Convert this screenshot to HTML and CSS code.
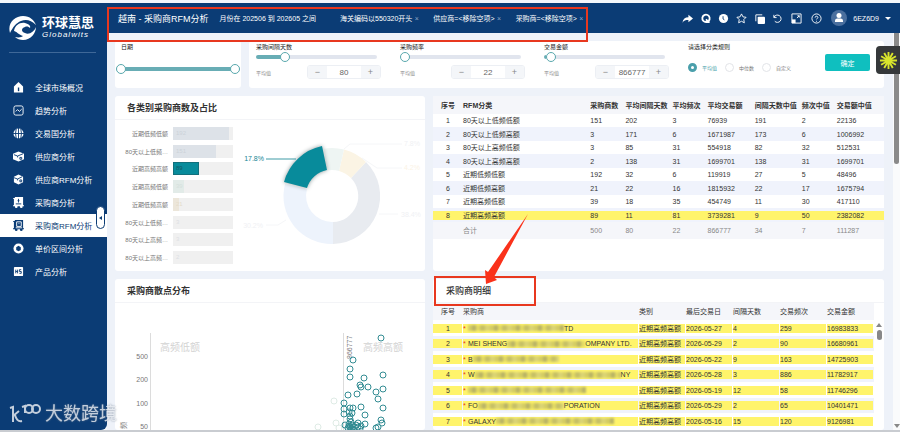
FILE: index.html
```
<!DOCTYPE html>
<html lang="zh-CN">
<head>
	<meta charset="utf-8">
	<title>采购商RFM分析</title>
	<meta name="viewport" content="width=device-width, initial-scale=1">
	<link rel="stylesheet" href="styles.css">
</head>
<body>
<div class="app">
	<aside class="sidebar">
		<div class="brand">
			<svg class="brand-mark" viewBox="0 0 28 24" aria-hidden="true">
				<path d="M1 17C-2 7 6 0 14 0c7 0 11 4 13 9-5-5-10-6-15-4C7 7 4 11 1 17z"/>
				<path d="M5 15c1-6 6-9 11-8 4 1 6 3 5 5-1-1-3-2-5-1-4 1-4 5 0 6 4 2 9-1 11-6 0 6-5 13-13 13-3 0-6-1-8-3 4 1 7 0 8-1-4-1-7-5-9-5z"/>
			</svg>
			<div class="brand-text">
				<strong>环球慧思</strong>
				<em>Globalwits</em>
			</div>
		</div>
		<nav class="menu">
			<a href="#"><svg viewBox="0 0 12 12"><path d="M6 0l5 5v6.500H1V5z"/><path class="cut" d="M5.300 6h1.500v4H5.300z"/></svg>全球市场概况</a>
			<a href="#"><svg viewBox="0 0 12 12"><rect class="line" x="1" y="1" width="10" height="10" rx="2"/><path class="line" d="M3 7l2-2 2 2 2.500-2.500"/></svg>趋势分析</a>
			<a href="#"><svg viewBox="0 0 12 12"><circle cx="6" cy="6" r="5.500"/><path class="cut-line" d="M0 6h12M6 0v12M3.500 1Q2 6 3.500 11M8.500 1Q10 6 8.500 11"/></svg>交易国分析</a>
			<a href="#"><svg viewBox="0 0 12 12"><path d="M0 3l6-2.500L12 3v6l-6 2.500L0 9z"/><path class="cut-line" d="M1 4l4 1.500 6-2.500M5 5.500v1.500M7.500 7h2v2h-2z"/></svg>供应商分析</a>
			<a href="#"><svg viewBox="0 0 12 12"><path d="M1 3l5-2.500L11 3v6l-5 2.500L1 9z"/><path class="cut-line" d="M1 4l4 1.500 5-2.500M5 5.500v1.500M7.500 6.500h2v2h-2z"/></svg>供应商RFM分析</a>
			<a href="#"><svg viewBox="0 0 12 12"><path d="M2 0h9v9h1v1H0V9h1V2H0V1h2z"/><circle cx="3.500" cy="10.500" r="1.500"/><circle cx="9" cy="10.500" r="1.500"/><path class="cut-line" d="M3 7.500h6M6 2v4M5 4h2"/></svg>采购商分析</a>
			<a href="#" class="active"><svg viewBox="0 0 12 12"><path d="M2 0h9v9h1v1H0V9h1V2H0V1h2z"/><circle cx="3.500" cy="10.500" r="1.500"/><circle cx="9" cy="10.500" r="1.500"/><path class="cut-line" d="M4 2h5v5H4zM6 4h1M3 8.500h7"/></svg>采购商RFM分析</a>
			<a href="#"><svg viewBox="0 0 12 12"><circle cx="6" cy="6" r="5.500"/><path class="cut" d="M6 3l2.500 1.500v3L6 9 3.500 7.500v-3z"/></svg>单价区间分析</a>
			<a href="#"><svg viewBox="0 0 12 12"><rect x="1" y="1" width="10" height="10" rx="1"/><path class="cut-line" d="M3 4v4M5 4v4M3 6h2M9 4H7v2h2v2H7"/></svg>产品分析</a>
		</nav>
		<button class="collapse" aria-label="收起菜单"></button>
	</aside>

	<header class="topbar">
		<h1>越南 - 采购商RFM分析</h1>
		<ul class="conditions">
			<li>月份在 202506 到 202605 之间</li>
			<li>海关编码以550320开头<button aria-label="移除海关编码">×</button></li>
			<li>供应商=&lt;移除空项&gt;<button aria-label="移除供应商">×</button></li>
			<li>采购商=&lt;移除空项&gt;<button aria-label="移除采购商">×</button></li>
		</ul>
		<div class="tools">
			<button aria-label="分享"><svg viewBox="0 0 12 12"><path class="fill" d="M7 2l5 4-5 4V7.500C4 7.500 2 8 .5 10.500 1 6.500 3.500 4.500 7 4.500z"/></svg></button>
			<button aria-label="查询"><svg viewBox="0 0 12 12"><path class="thick" d="M9.500 8.500A4 4 0 1 0 7 9.800h3.500M6.500 7l3 3"/></svg></button>
			<button aria-label="历史"><svg viewBox="0 0 12 12"><circle class="fill" cx="6" cy="6" r="5"/><path class="dark" d="M5.500 3.500v3l1.500 1"/></svg></button>
			<button aria-label="收藏"><svg viewBox="0 0 12 12"><path d="M6 1l1.600 3.200 3.400.5-2.500 2.500.6 3.500L6 9l-3.100 1.700.6-3.500L1 4.700l3.400-.5z"/></svg></button>
			<button aria-label="复制"><svg viewBox="0 0 12 12"><rect class="fill" x="4" y="4" width="8" height="8" rx="1"/><path d="M2 9V2h7"/></svg></button>
			<button aria-label="刷新"><svg viewBox="0 0 12 12"><path d="M2 2v3h3M2.300 4.500A4 4 0 1 1 3 9"/></svg></button>
			<button aria-label="全屏" class="wide"><svg viewBox="0 0 12 12"><path d="M1 1h10v10H1zM6.500 5.500L9 3M7 3h2v2"/><path class="fill" d="M1 7h4v4H1z"/></svg></button>
			<button aria-label="帮助" class="wide"><svg viewBox="0 0 12 12"><circle cx="6" cy="6" r="5"/><path d="M4.500 5c0-2 3-2 3 0 0 1-1.500 1-1.500 2M6 8.500v1"/></svg></button>
		</div>
		<button class="user">
			<svg viewBox="0 0 16 16"><circle class="ring" cx="8" cy="8" r="8"/><circle cx="8" cy="5.500" r="2.500"/><path d="M4 12V10.500Q4 9 6 8.500h4q2 .5 2 2V12z"/></svg>
			6EZ6D9
			<i class="caret"></i>
		</button>
		<div class="mark mark-top"></div>
	</header>

	<main class="content">
		<section class="card date-filter">
			<h3>日期</h3>
			<div class="range-pair">
				<input type="range" min="0" max="100" value="0" aria-label="开始日期">
				<input type="range" min="0" max="100" value="100" aria-label="结束日期">
			</div>
		</section>

		<section class="card filters">
			<div class="filter">
				<label for="gap">采购间隔天数</label>
				<input id="gap" type="range" value="22" style="--fill: 22%">
				<div class="average">
					<span>平均值</span>
					<div class="stepper"><button aria-label="减少">−</button><input type="text" value="80" aria-label="间隔天数平均值"><button aria-label="增加">+</button></div>
				</div>
			</div>
			<div class="filter">
				<label for="freq">采购频率</label>
				<input id="freq" type="range" value="0" style="--fill: 0%">
				<div class="average">
					<span>平均值</span>
					<div class="stepper"><button aria-label="减少">−</button><input type="text" value="22" aria-label="频率平均值"><button aria-label="增加">+</button></div>
				</div>
			</div>
			<div class="filter">
				<label for="amount">交易金额</label>
				<input id="amount" type="range" value="2" style="--fill: 2%">
				<div class="average">
					<span>平均值</span>
					<div class="stepper"><button aria-label="减少">−</button><input type="text" value="866777" aria-label="金额平均值"><button aria-label="增加">+</button></div>
				</div>
			</div>
			<fieldset class="rules">
				<legend>请选择分类规则</legend>
				<div class="options">
					<label><input type="radio" name="rule" checked><span>平均值</span></label>
					<label><input type="radio" name="rule"><span>中位数</span></label>
					<label><input type="radio" name="rule"><span>自定义</span></label>
				</div>
			</fieldset>
			<button class="confirm">确定</button>
		</section>

		<section class="card share">
			<h2>各类别采购商数及占比</h2>
			<div class="share-body">
				<ul class="bars">
					<li><span>近期低频低额</span><div class="bar"><i class="grey" style="width: 93%">192</i></div></li>
					<li><span>80天以上低频…</span><div class="bar"><i class="grey" style="width: 72%">151</i></div></li>
					<li><span>近期高频高额</span><div class="bar"><i class="teal" style="width: 43%">89</i></div></li>
					<li><span>近期高频低额</span><div class="bar"><i class="green" style="width: 19%">39</i></div></li>
					<li><span>近期低频高额</span><div class="bar"><i class="sand" style="width: 10%">21</i></div></li>
					<li><span>80天以上低频…</span><div class="bar"><i style="width: 2%">3</i></div></li>
					<li><span>80天以上高频…</span><div class="bar"><i style="width: 2%">3</i></div></li>
					<li><span>80天以上高频…</span><div class="bar"><i style="width: 2%">2</i></div></li>
				</ul>
				<svg class="donut" viewBox="-99 -76 192 151" role="img" aria-label="各类别占比">
					<path fill="#e8ebf0" d="M34-34A48 48 0 0 1 1 48V26A26 26 0 0 0 19-18z"/>
					<path fill="#edf3fc" d="M1 48A48 48 0 0 1-47-12L-25-7A26 26 0 0 0 1 26z"/>
					<path fill="#fbf4e4" d="M12-46.500A48 48 0 0 1 34-34L19-18A26 26 0 0 0 7-25z"/>
					<path fill="#eef5f3" d="M-8-47.300A48 48 0 0 1 12-46.500L7-25A26 26 0 0 0-5-25.500z"/>
					<path class="slice" d="M-48-14A50 50 0 0 1-10-50L-5-26A26 26 0 0 0-25-8z"/>
					<path class="guide" d="M-66-37h30"/>
					<path class="faint" d="M12-47L18-52H70M47 18H66M-46 24l-8 5H-66M30-38l15 10h25"/>
					<text x="-68" y="-35" text-anchor="end">17.8%</text>
					<text class="dim" x="69" y="21">38.4%</text>
					<text class="dim" x="-69" y="32" text-anchor="end">30.2%</text>
					<text class="dim" x="72" y="-50">7.8%</text>
					<text class="dim sandy" x="72" y="-26">4.2%</text>
				</svg>
			</div>
		</section>

		<section class="card summary">
			<table class="grid summary-grid">
				<colgroup><col class="c-no"><col class="c-class"><col class="c-short"><col class="c-long"><col class="c-short"><col class="c-long"><col class="c-long"><col class="c-short"><col class="c-long"></colgroup>
				<thead>
					<tr><th>序号</th><th>RFM分类</th><th>采购商数</th><th>平均间隔天数</th><th>平均频次</th><th>平均交易额</th><th>间隔天数中值</th><th>频次中值</th><th>交易额中值</th></tr>
				</thead>
				<tbody>
					<tr><td>1</td><td>80天以上低频低额</td><td>151</td><td>202</td><td>3</td><td>76939</td><td>191</td><td>2</td><td>22136</td></tr>
					<tr><td>2</td><td>80天以上低频高额</td><td>3</td><td>171</td><td>6</td><td>1671987</td><td>173</td><td>6</td><td>1006992</td></tr>
					<tr><td>3</td><td>80天以上高频低额</td><td>3</td><td>85</td><td>31</td><td>554918</td><td>82</td><td>32</td><td>512531</td></tr>
					<tr><td>4</td><td>80天以上高频高额</td><td>2</td><td>138</td><td>31</td><td>1699701</td><td>138</td><td>31</td><td>1699701</td></tr>
					<tr><td>5</td><td>近期低频低额</td><td>192</td><td>32</td><td>6</td><td>119919</td><td>27</td><td>5</td><td>48496</td></tr>
					<tr><td>6</td><td>近期低频高额</td><td>21</td><td>22</td><td>16</td><td>1815932</td><td>22</td><td>17</td><td>1675794</td></tr>
					<tr><td>7</td><td>近期高频低额</td><td>39</td><td>18</td><td>35</td><td>454749</td><td>11</td><td>30</td><td>417110</td></tr>
					<tr class="hit"><td>8</td><td>近期高频高额</td><td>89</td><td>11</td><td>81</td><td>3739281</td><td>9</td><td>50</td><td>2382082</td></tr>
				</tbody>
				<tfoot>
					<tr><td></td><td>合计</td><td>500</td><td>80</td><td>22</td><td>866777</td><td>34</td><td>7</td><td>111287</td></tr>
				</tfoot>
			</table>
		</section>

		<section class="card scatter">
			<h2>采购商散点分布</h2>
			<svg class="plot" viewBox="0 0 310 128" preserveAspectRatio="xMinYMin slice" role="img" aria-label="采购商散点分布">
				<path class="axis" d="M35.500 30V128M228.500 30V128"/>
				<g class="ticks" text-anchor="end">
					<text x="33" y="56">500</text>
					<text x="33" y="79">200</text>
					<text x="33" y="103">100</text>
					<text x="33" y="126">50</text>
				</g>
				<text class="ticks" transform="translate(237 56) rotate(-90)">866777</text>
				<text class="ticks" transform="translate(11 126) rotate(-90)">频</text>
				<text class="zone" x="45" y="48">高频低额</text>
				<text class="zone" x="248" y="48">高频高额</text>
				<g class="pale"><circle cx="219" cy="98" r="3"/><circle cx="203" cy="124" r="3"/><circle cx="221" cy="120" r="3"/><circle cx="224" cy="125" r="3"/></g>
				<g id="dots" class="dots"></g>
			</svg>
		</section>

		<section class="card detail">
			<h2>采购商明细</h2>
			<div class="detail-body">
				<table class="grid detail-grid">
					<colgroup><col class="d-no"><col class="d-name"><col class="d-mid"><col class="d-mid"><col class="d-mid"><col class="d-mid"><col class="d-mid"></colgroup>
					<thead>
						<tr><th>序号</th><th>采购商</th><th>类别</th><th>最后交易日</th><th>间隔天数</th><th>交易频次</th><th>交易金额</th></tr>
					</thead>
					<tbody>
						<tr><td>1</td><td><div class="name"><b>*</b><i class="mask w6"></i>TD</div></td><td>近期高频高额</td><td>2026-05-27</td><td>4</td><td>259</td><td>16983833</td></tr>
						<tr><td>2</td><td><div class="name"><b>*</b>MEI SHENG<i class="mask w4"></i>OMPANY LTD.</div></td><td>近期高频高额</td><td>2026-05-29</td><td>2</td><td>90</td><td>16680961</td></tr>
						<tr><td>3</td><td><div class="name"><b>*</b>B<i class="mask w5"></i></div></td><td>近期高频高额</td><td>2026-05-22</td><td>9</td><td>163</td><td>14725903</td></tr>
						<tr><td>4</td><td><div class="name"><b>*</b>W<i class="mask w8"></i>NY</div></td><td>近期高频高额</td><td>2026-05-28</td><td>3</td><td>886</td><td>11782917</td></tr>
						<tr><td>5</td><td><div class="name"><b>*</b><i class="mask w7"></i></div></td><td>近期高频高额</td><td>2026-05-19</td><td>12</td><td>58</td><td>11746296</td></tr>
						<tr><td>6</td><td><div class="name"><b>*</b>FO<i class="mask w5"></i>PORATION</div></td><td>近期高频高额</td><td>2026-05-29</td><td>2</td><td>65</td><td>10401471</td></tr>
						<tr><td>7</td><td><div class="name"><b>*</b>GALAXY<i class="mask w7"></i></div></td><td>近期高频高额</td><td>2026-05-16</td><td>15</td><td>120</td><td>9126981</td></tr>
					</tbody>
				</table>
				<div class="mini-scroll"><i class="up"></i><i class="thumb"></i></div>
			</div>
			<div class="mark mark-detail"></div>
			<svg class="arrow" viewBox="0 0 46 72" aria-hidden="true"><path d="M44 1L10 64l3 3L2 71 1 57l3 2z"/></svg>
		</section>
	</main>

	<div class="page-scroll"><i class="thumb"></i><i class="down"></i></div>
	<button class="helper" aria-label="助手">
		<svg viewBox="0 0 20 20"><path d="M10 1v18M1 10h18M5.500 2.200l9 15.600M14.500 2.200l-9 15.600M2.200 5.500l15.600 9M17.800 5.500l-15.600 9"/></svg>
	</button>
	<div class="stamp">
		<svg viewBox="0 0 32 22" aria-hidden="true"><path d="M1 5l3-1v15M4 13l6-5M6 12c1 4 3 7 7 6M13 4l3-1v7"/><circle cx="20" cy="6" r="4"/><circle cx="27" cy="6" r="4"/></svg>
		大数跨境
	</div>
</div>
<script>
	const DOTS = [
		[266,35],[238,57],[235,66],[235,74],[249,75],[268,72],[245,82],[246,84],[253,84],[268,86],
		[261,89],[263,96],[233,92],[242,91],[229,100],[229,106],[229,111],[235,105],[238,105],[246,104],
		[250,112],[268,105],[266,117],[267,120],[263,124],[261,125],[243,120],[250,121],[230,122],[234,109],
		[237,110],[235,113],[235,116],[236,119],[234,121],[237,122],[235,124],[238,124],[233,125],[236,126],
		[235,127],[239,127],[243,124],[245,126],[241,122],[234,123],[237,126],[246,123]
	];
	document.getElementById('dots').innerHTML = DOTS.map(([x, y]) => `<circle cx="${x}" cy="${y}" r="3"/>`).join('');
</script>
</body>
</html>
```
FILE: styles.css
```
* {
	box-sizing: border-box;
}
body {
	margin: 0;
	color: #333;
	font-family: "Liberation Sans", "Noto Sans CJK SC", sans-serif;
	font-size: 7px;
	background: #f4f7fb;
}
button,
input {
	font: inherit;
	color: inherit;
	margin: 0;
	padding: 0;
	border: 0;
	background: none;
}
h1,
h2,
h3,
ul {
	margin: 0;
	padding: 0;
	list-style: none;
}
i {
	font-style: normal;
}
.app {
	position: relative;
	display: grid;
	grid-template-columns: 107px 1fr 7px;
	grid-template-rows: 30px 1fr;
	height: 100vh;
	padding-top: 3px;
	border-bottom: 2px solid #c9ccd1;
	overflow: hidden;
}

/* sidebar */
.sidebar {
	position: relative;
	grid-row: 1 / 3;
	color: #fff;
	background: #0b3c75;
	border-bottom-right-radius: 6px;
}
.brand {
	display: flex;
	align-items: center;
	gap: 5px;
	height: 50px;
	margin: 0 11px 23px 9px;
	border-bottom: 1px solid #3f6898;
}
.brand-mark {
	width: 28px;
	height: 24px;
	fill: #fff;
}
.brand-text {
	display: flex;
	flex-direction: column;
}
.brand strong {
	font: bold 13px/14px "Liberation Serif", "Noto Sans CJK SC", serif;
}
.brand em {
	font-size: 8px;
	line-height: 9px;
	letter-spacing: 1px;
}
.menu a {
	display: flex;
	align-items: center;
	gap: 11px;
	height: 23px;
	padding-left: 13px;
	color: #fff;
	font-size: 8px;
	text-decoration: none;
}
.menu svg {
	width: 11px;
	height: 11px;
	fill: #fff;
}
.menu .line {
	fill: none;
	stroke: #fff;
}
.menu .cut {
	fill: #0b3c75;
}
.menu .cut-line {
	fill: none;
	stroke: #0b3c75;
}
.menu .active {
	color: #0b3c75;
	background: #fff;
}
.menu .active svg {
	fill: #0b3c75;
}
.menu .active .cut-line {
	stroke: #fff;
}
.collapse {
	position: absolute;
	top: 203px;
	right: 2px;
	width: 9px;
	height: 23px;
	display: grid;
	place-items: center;
	background: #fff;
	border: 1px solid #0b3c75;
	border-radius: 5px;
}
.collapse::before {
	content: "";
	border: 2px solid transparent;
	border-right: 3px solid #0b3c75;
	border-left: 0;
}

/* top bar */
.topbar {
	position: relative;
	grid-column: 2 / 4;
	display: flex;
	align-items: center;
	padding: 0 9px 0 11px;
	color: #fff;
	background: #0b3c75;
}
.topbar h1 {
	margin-right: 11px;
	font-size: 9px;
	font-weight: normal;
	white-space: nowrap;
}
.conditions {
	display: flex;
	gap: 12px;
	white-space: nowrap;
}
.conditions li:first-child {
	margin-right: 12px;
}
.conditions button {
	width: 9px;
	color: #8da7c6;
}
.tools {
	display: flex;
	align-items: center;
	gap: 6px;
	margin-left: auto;
}
.tools button {
	display: grid;
	place-items: center;
	width: 12px;
}
.tools .wide {
	width: 14px;
}
.tools svg {
	width: 11px;
	height: 11px;
	fill: none;
	stroke: #fff;
}
.tools .thick {
	stroke-width: 2;
}
.tools .fill {
	fill: #fff;
	stroke: none;
}
.tools .dark {
	stroke: #0b3c75;
}
.user {
	display: flex;
	align-items: center;
	gap: 6px;
	margin-left: 8px;
}
.user svg {
	width: 16px;
	height: 16px;
	fill: #fff;
}
.user .ring {
	fill: #4a6f9e;
}
.caret {
	border: 3px solid transparent;
	border-top-color: #fff;
	border-bottom: 0;
}

/* red marks */
.mark {
	position: absolute;
	border: 2px solid #e8381f;
	pointer-events: none;
	z-index: 2;
}
.mark-top {
	top: 4px;
	left: 0;
	width: 481px;
	height: 35px;
}
.mark-detail {
	top: -3px;
	left: 1px;
	width: 102px;
	height: 30px;
}
.arrow {
	position: absolute;
	top: -66px;
	left: 51px;
	width: 46px;
	height: 72px;
	fill: #fa321b;
	z-index: 3;
}

/* content */
.content {
	display: grid;
	grid-template-columns: 126fr 176fr 451fr;
	grid-template-rows: auto auto 1fr;
	gap: 8px;
	min-height: 0;
	padding: 8px 9px 0 8px;
	background: #eef2f9;
}
.card {
	position: relative;
	min-width: 0;
	min-height: 0;
	background: #fff;
	border-radius: 3px;
}
.card h2 {
	height: 24px;
	padding-left: 12px;
	font-size: 9px;
	line-height: 24px;
	border-bottom: 1px solid #f3f4f7;
}
.filters {
	grid-column: 2 / 4;
	display: flex;
	gap: 19px;
	padding: 2px 14px 0 7px;
	min-height: 47px;
}
.date-filter {
	padding: 2px 1px 0;
}
.date-filter h3,
.filter > label,
.rules legend {
	display: block;
	padding: 0;
	font-size: 6px;
	font-weight: normal;
	line-height: 9px;
	color: #222;
}
.date-filter h3 {
	padding-left: 5px;
}
.range-pair {
	display: grid;
	margin-top: 12px;
}
.range-pair input {
	grid-area: 1 / 1;
	pointer-events: none;
}
.range-pair input:first-child {
	--fill: 100%;
}
.range-pair input:last-child {
	--track: transparent;
	--fill: 0%;
}
input[type="range"] {
	display: block;
	width: 100%;
	height: 10px;
	appearance: none;
}
input[type="range"]::-webkit-slider-runnable-track {
	height: 4px;
	border-radius: 2px;
	background: linear-gradient(to right, #68adb5 var(--fill), var(--track, #e1e5ee) var(--fill));
}
input[type="range"]::-webkit-slider-thumb {
	width: 10px;
	height: 10px;
	margin-top: -3px;
	appearance: none;
	pointer-events: auto;
	background: #fff;
	border: 1px solid #59a8ad;
	border-radius: 50%;
}
.filter {
	flex: 0 1 125px;
	min-width: 0;
}
.filter input[type="range"] {
	width: 121px;
	max-width: 100%;
}
.average {
	display: flex;
	align-items: center;
	justify-content: space-between;
	margin-top: 3px;
	font-size: 5px;
	color: #888;
}
.stepper {
	display: flex;
	width: 74px;
	height: 14px;
	font-size: 8px;
	color: #666;
	border: 1px solid #eceff4;
	border-radius: 3px;
	overflow: hidden;
}
.stepper button {
	flex: 0 0 19px;
	font-size: 9px;
	line-height: 12px;
	color: #888;
	background: #f4f6f9;
}
.stepper input {
	flex: 1;
	min-width: 0;
	text-align: center;
}
.rules {
	margin: 0;
	padding: 0;
	border: 0;
}
.options {
	display: flex;
	gap: 8px;
	margin-top: 11px;
	font-size: 5px;
	color: #777;
}
.options label {
	display: flex;
	align-items: center;
	gap: 5px;
	white-space: nowrap;
}
.options input {
	width: 9px;
	height: 9px;
	appearance: none;
	border: 1px solid #e2e4e8;
	border-radius: 50%;
}
.options input:checked {
	border: 3px solid #4a9fab;
}
.options input:checked + span {
	color: #4a9fab;
}
.confirm {
	width: 45px;
	height: 17px;
	margin: 11px 0 0 auto;
	color: #fff;
	background: #0fbfbf;
	border-radius: 2px;
}

/* category share */
.share {
	grid-column: 1 / 3;
	min-height: 175px;
}
.share-body {
	display: flex;
	height: 151px;
}
.bars {
	display: flex;
	flex-direction: column;
	justify-content: space-between;
	flex: 0 0 118px;
	padding: 7px 0 7px 8px;
}
.bars li {
	display: flex;
	align-items: center;
	gap: 5px;
	font-size: 6px;
	color: #777;
}
.bars span {
	flex: 0 0 45px;
	text-align: right;
	white-space: nowrap;
}
.bar {
	flex: 1;
	height: 13px;
	line-height: 13px;
	background: #f0f0f0;
}
.bar i {
	display: block;
	height: 13px;
	padding-left: 3px;
	color: #dde0e4;
}
.bar .grey {
	color: #ccd2d9;
	background: #dde2e8;
}
.bar .teal {
	color: #135a66;
	background: #088b9b;
	outline: 1px solid #13707c;
	outline-offset: -1px;
}
.bar .green {
	color: #d5e0dc;
	background: #e2ebe8;
}
.bar .sand {
	color: #e4dccb;
	background: #ece6da;
}
.donut {
	flex: 1;
	min-width: 0;
	font-size: 7px;
	fill: #158493;
}
.slice {
	fill: #088b9b;
	filter: drop-shadow(0 0 2px #8d9a9b);
}
.guide,
.faint {
	fill: none;
	stroke: #3e9ba6;
}
.faint {
	stroke: #f5f6f8;
}
.dim {
	fill: #f0f1f4;
}
.sandy {
	fill: #fbf3e6;
}

/* tables */
.grid {
	width: 100%;
	table-layout: fixed;
	border-collapse: collapse;
	line-height: 9px;
	white-space: nowrap;
}
.grid th,
.grid td {
	padding: 0;
	text-align: left;
}
.grid th:first-child,
.grid td:first-child {
	text-align: center;
}
.grid th {
	color: #333;
	background: #f5f6fa;
}
.grid tbody tr {
	height: 13px;
}
.grid tbody tr:nth-child(even) {
	height: 14px;
	background: #f0f3fc;
}
.summary-grid th {
	height: 18px;
}
.summary-grid tfoot td {
	height: 17px;
	color: #888;
	background: #f5f6fa;
}
.grid .hit td {
	background: linear-gradient(#fff46b, #fff46b) center / 100% 9px no-repeat;
}
.c-no { width: 30px; }
.c-class { width: 127px; }
.c-short { width: 35px; }
.c-long { width: 47px; }

/* scatter */
.scatter {
	grid-column: 1 / 3;
	overflow: hidden;
}
.plot {
	display: block;
	width: 100%;
	height: 128px;
}
.axis {
	stroke: #dcdcdc;
}
.ticks {
	font-size: 7px;
	fill: #777;
}
.zone {
	font-size: 10px;
	fill: #d3d3d3;
}
.dots circle {
	fill: none;
	stroke: #338c93;
}
.pale circle {
	fill: none;
	stroke: #deebe5;
}

/* detail */
.detail h2 {
	padding-left: 13px;
	font-weight: 500;
}
.detail-body {
	display: flex;
	height: 127px;
	overflow: hidden;
}
.detail-grid {
	flex: 1;
	min-width: 0;
	align-self: flex-start;
}
.detail-grid th {
	height: 17px;
	font-weight: normal;
}
.detail-grid tbody tr {
	height: 16px;
}
.detail-grid tbody tr:nth-child(even) {
	height: 15px;
}
.detail-grid tbody td {
	background: linear-gradient(#fff46b, #fff46b) left center / calc(100% - 1px) 9px no-repeat;
}
.name {
	display: flex;
	align-items: center;
	height: 9px;
}
.name b {
	width: 5px;
	color: #e8381f;
	font-weight: normal;
}
.mask {
	height: 6px;
	opacity: 0.6;
	background: repeating-linear-gradient(to right, #b9b35f 0 4px, #8c8a62 4px 8px, #d0c95f 8px 12px, #a29f63 12px 17px, #c3bf7a 17px 22px);
	filter: blur(1px);
}
.w4 { width: 78px; }
.w5 { width: 86px; }
.w6 { width: 96px; }
.w7 { width: 118px; }
.w8 { width: 146px; }
.d-no { width: 30px; }
.d-name { width: 176px; }
.d-mid { width: 47px; }
.mini-scroll {
	flex: 0 0 10px;
	display: flex;
	flex-direction: column;
	align-items: center;
	gap: 3px;
	padding-top: 20px;
}
.up {
	border: 3px solid transparent;
	border-top: 0;
	border-bottom: 4px solid #888;
}
.mini-scroll .thumb {
	width: 5px;
	height: 10px;
	background: #888;
	border-radius: 3px;
}

/* page chrome */
.page-scroll {
	display: flex;
	flex-direction: column;
	justify-content: space-between;
	align-items: center;
	padding-bottom: 2px;
	background: #fafbfc;
}
.page-scroll .thumb {
	width: 5px;
	height: 131px;
	background: #8a8a8a;
	border-radius: 0 0 3px 3px;
}
.down {
	border: 3px solid transparent;
	border-top: 4px solid #888;
	border-bottom: 0;
}
.helper {
	position: absolute;
	top: 46px;
	right: 0;
	width: 24px;
	height: 28px;
	display: grid;
	place-items: center;
	background: #35383a;
	border-radius: 4px 0 0 4px;
}
.helper svg {
	width: 19px;
	height: 19px;
	stroke: #d9e52c;
	stroke-width: 2;
}
.stamp {
	position: absolute;
	left: 9px;
	bottom: 4px;
	display: flex;
	align-items: center;
	gap: 4px;
	font-size: 18px;
	line-height: 24px;
	color: #e4e8ee;
	opacity: 0.85;
	text-shadow: 0 0 2px #7a8797;
}
.stamp svg {
	width: 32px;
	height: 22px;
	fill: none;
	stroke: #e4e8ee;
	stroke-width: 2;
}
```
